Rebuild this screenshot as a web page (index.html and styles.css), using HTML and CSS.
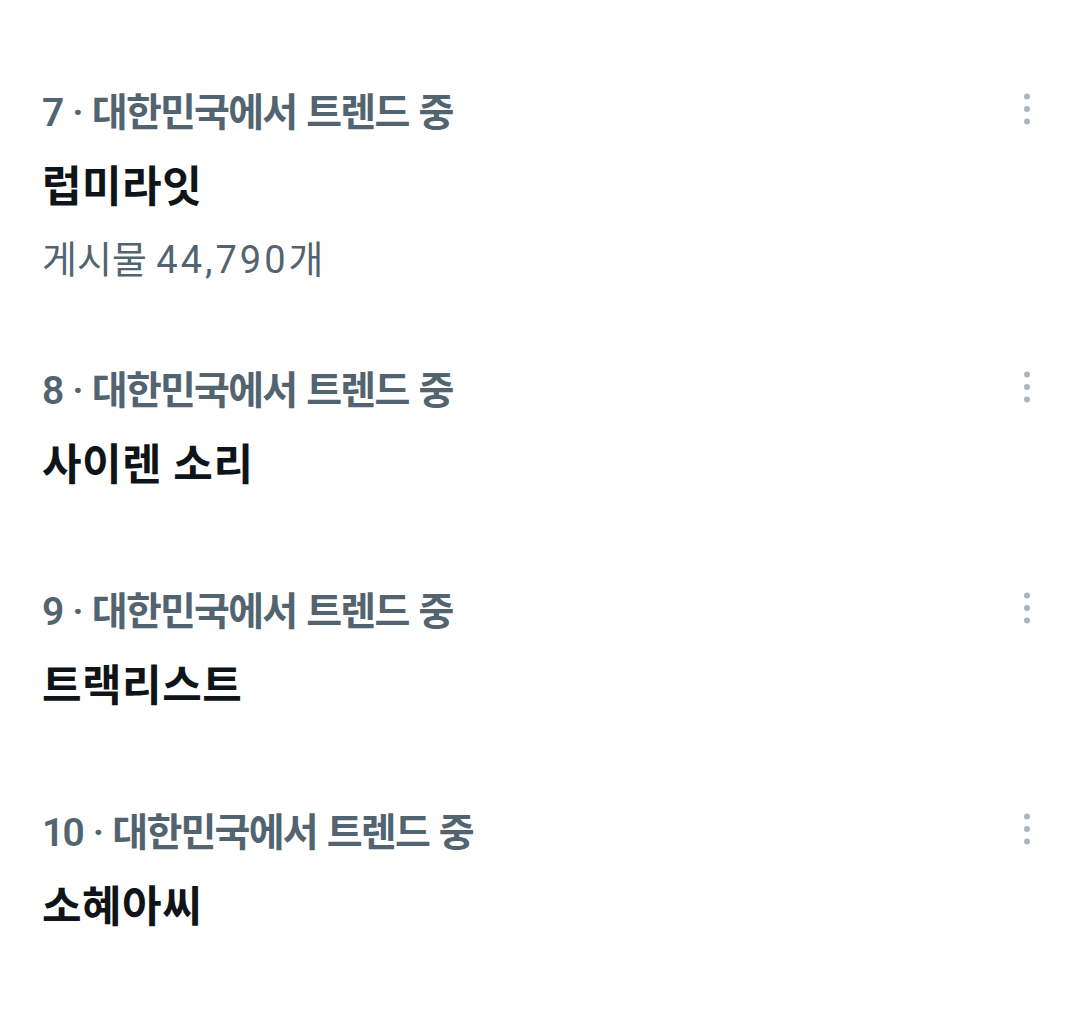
FILE: index.html
```html
<!DOCTYPE html>
<html lang="ko">
<head>
<meta charset="utf-8">
<title>트렌드</title>
<link rel="stylesheet" href="styles.css">
</head>
<body>
<main class="trends">
  <section class="trend">
    <div class="trend-head">
      <span class="trend-meta">7 · 대한민국에서 트렌드 중</span>
      <svg class="kebab" viewBox="0 0 20 40" width="20" height="40" aria-hidden="true"><circle cx="10" cy="3.5" r="3"/><circle cx="10" cy="16" r="3"/><circle cx="10" cy="28.5" r="3"/></svg>
    </div>
    <div class="trend-title">럽미라잇</div>
    <div class="trend-count">게시물 <span class="trend-num">44,790</span>개</div>
  </section>
  <section class="trend">
    <div class="trend-head">
      <span class="trend-meta">8 · 대한민국에서 트렌드 중</span>
      <svg class="kebab" viewBox="0 0 20 40" width="20" height="40" aria-hidden="true"><circle cx="10" cy="3.5" r="3"/><circle cx="10" cy="16" r="3"/><circle cx="10" cy="28.5" r="3"/></svg>
    </div>
    <div class="trend-title">사이렌 소리</div>
  </section>
  <section class="trend">
    <div class="trend-head">
      <span class="trend-meta">9 · 대한민국에서 트렌드 중</span>
      <svg class="kebab" viewBox="0 0 20 40" width="20" height="40" aria-hidden="true"><circle cx="10" cy="3.5" r="3"/><circle cx="10" cy="16" r="3"/><circle cx="10" cy="28.5" r="3"/></svg>
    </div>
    <div class="trend-title">트랙리스트</div>
  </section>
  <section class="trend">
    <div class="trend-head">
      <span class="trend-meta">10 · 대한민국에서 트렌드 중</span>
      <svg class="kebab" viewBox="0 0 20 40" width="20" height="40" aria-hidden="true"><circle cx="10" cy="3.5" r="3"/><circle cx="10" cy="16" r="3"/><circle cx="10" cy="28.5" r="3"/></svg>
    </div>
    <div class="trend-title">소혜아씨</div>
  </section>
</main>
</body>
</html>
```
FILE: styles.css
```css
html, body {
  margin: 0;
  padding: 0;
  background: #ffffff;
}

body {
  font-family: Roboto, "Noto Sans CJK KR", "Noto Sans", sans-serif;
  color: #0f1419;
}

.trends {
  display: flex;
  flex-direction: column;
  padding: 45px 43px 0 42px;
}

.trend {
  display: flex;
  flex-direction: column;
  padding: 44px 0 51px;
}

.trend-head {
  display: flex;
  align-items: center;
  justify-content: space-between;
  height: 48px;
}

.trend-meta {
  font-size: 39px;
  line-height: 48px;
  font-weight: 600;
  color: #536471;
  letter-spacing: -1.8px;
  word-spacing: 2px;
  white-space: nowrap;
}

.kebab {
  flex: none;
  fill: #a9b6c2;
}

.trend-title {
  margin-top: 22px;
  font-size: 43px;
  line-height: 56px;
  font-weight: 700;
  color: #0f1419;
  letter-spacing: 0.5px;
  white-space: nowrap;
}

.trend-count {
  margin-top: 33px;
  font-size: 38px;
  line-height: 24px;
  font-weight: 400;
  color: #536471;
  letter-spacing: 0;
  white-space: nowrap;
}

.trend-num {
  letter-spacing: 3px;
}
```
